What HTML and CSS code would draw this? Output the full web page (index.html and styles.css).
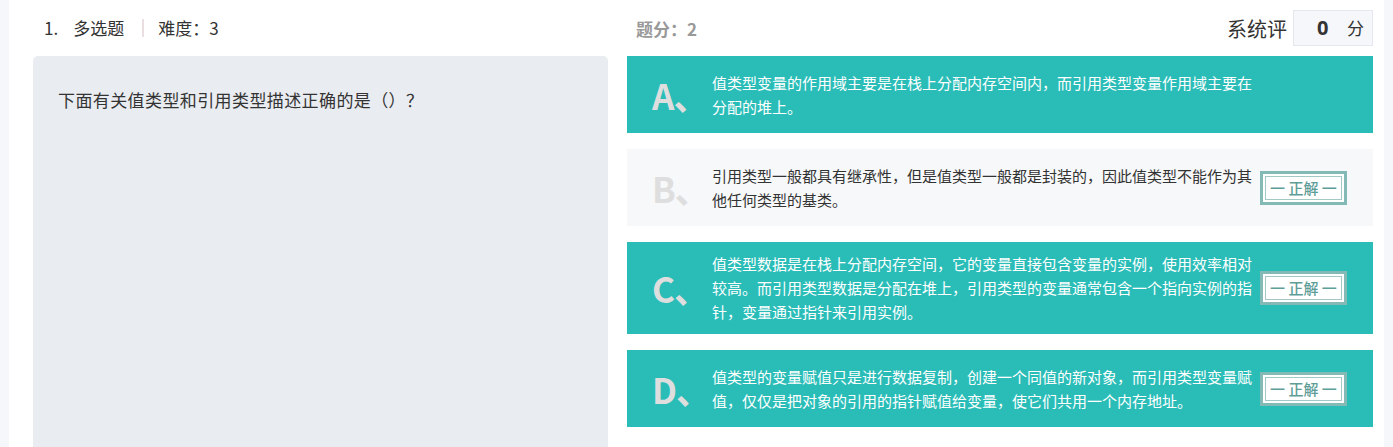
FILE: index.html
```html
<!DOCTYPE html>
<html lang="zh-CN">
<head>
<meta charset="utf-8">
<title>多选题</title>
<link rel="stylesheet" href="styles.css">
</head>
<body>
<div class="page">
  <div class="header">
    <div class="header-left">
      <span class="num">1.</span>
      <span class="type">多选题</span>
      <span class="sep"></span>
      <span class="diff">难度：3</span>
    </div>
    <div class="header-right">
      <span class="points">题分：2</span>
      <div class="score">
        <span class="score-label">系统评</span>
        <div class="score-box"><span class="score-val">0</span><span class="score-unit">分</span></div>
      </div>
    </div>
  </div>
  <div class="body">
    <div class="question">下面有关值类型和引用类型描述正确的是（）？</div>
    <div class="options">
      <div class="option option-on">
        <span class="letter">A、</span>
        <div class="opt-text">值类型变量的作用域主要是在栈上分配内存空间内，而引用类型变量作用域主要在分配的堆上。</div>
      </div>
      <div class="option option-off">
        <span class="letter">B、</span>
        <div class="opt-text">引用类型一般都具有继承性，但是值类型一般都是封装的，因此值类型不能作为其他任何类型的基类。</div>
        <span class="badge">一 正解 一</span>
      </div>
      <div class="option option-on">
        <span class="letter">C、</span>
        <div class="opt-text">值类型数据是在栈上分配内存空间，它的变量直接包含变量的实例，使用效率相对较高。而引用类型数据是分配在堆上，引用类型的变量通常包含一个指向实例的指针，变量通过指针来引用实例。</div>
        <span class="badge">一 正解 一</span>
      </div>
      <div class="option option-on">
        <span class="letter">D、</span>
        <div class="opt-text">值类型的变量赋值只是进行数据复制，创建一个同值的新对象，而引用类型变量赋值，仅仅是把对象的引用的指针赋值给变量，使它们共用一个内存地址。</div>
        <span class="badge">一 正解 一</span>
      </div>
    </div>
  </div>
</div>
</body>
</html>
```
FILE: styles.css
```css
* { box-sizing: border-box; }
html, body { margin: 0; padding: 0; }
body {
  background: #f5f7fa;
  font-family: "Noto Sans CJK SC", "Microsoft YaHei", sans-serif;
  color: #333;
  height: 447px;
  overflow: hidden;
}
.page {
  margin: 0 9px;
  background: #fff;
  padding: 0 11px 0 24px;
  height: 447px;
}
.header {
  display: flex;
  height: 56px;
  align-items: center;
}
.header-left {
  width: 594px;
  padding-left: 11px;
  display: flex;
  align-items: center;
  font-size: 17px;
  line-height: 24px;
  color: #333;
}
.num { margin-right: 15px; }
.sep {
  width: 2px;
  height: 18px;
  background: #eadfe0;
  margin: 0 14px 0 18px;
}
.header-right {
  flex: 1;
  display: flex;
  align-items: center;
  justify-content: space-between;
  padding-left: 9px;
}
.points {
  font-size: 17px;
  font-weight: bold;
  color: #999;
}
.score {
  display: flex;
  align-items: center;
}
.score-label {
  font-size: 20px;
  color: #333;
  margin-right: 6px;
}
.score-box {
  width: 80px;
  height: 36px;
  background: #f5f7fa;
  border: 1px solid #e4e7ed;
  display: flex;
  align-items: center;
  padding-left: 23px;
  margin-top: -1px;
}
.score-val {
  font-family: "Open Sans", "Liberation Sans", sans-serif;
  font-weight: bold;
  font-size: 20px;
  color: #333;
  width: 30px;
}
.score-unit {
  font-size: 17px;
  color: #333;
}
.body {
  display: flex;
  gap: 19px;
  align-items: flex-start;
}
.question {
  width: 575px;
  height: 391px;
  flex: none;
  background: #e9ecf0;
  border-radius: 5px 5px 0 0;
  padding: 32px 25px;
  font-size: 17px;
  line-height: 24px;
  letter-spacing: 0.4px;
  color: #333;
}
.options {
  flex: 1;
  display: flex;
  flex-direction: column;
  gap: 16px;
}
.option {
  display: flex;
  align-items: center;
  min-height: 77px;
  padding: 10px 0 10px 25px;
}
.option-on { background: #2abdb8; color: #fff; }
.option-off { background: #f7f8fa; color: #333; }
.letter {
  width: 60px;
  flex: none;
  font-size: 35px;
  font-weight: bold;
  color: #dedede;
  line-height: 40px;
  letter-spacing: -1px;
}
.opt-text {
  width: 541px;
  flex: none;
  font-size: 15px;
  line-height: 24px;
}
.badge {
  margin-left: 7px;
  width: 87px;
  height: 34px;
  flex: none;
  background: #fff;
  border: 3px solid #84bab6;
  box-shadow: inset 0 0 0 2px #fff, inset 0 0 0 3px #a3c9c6;
  color: #5f9d98;
  font-size: 15px;
  font-weight: 500;
  line-height: 28px;
  text-align: center;
  white-space: nowrap;
}
```
